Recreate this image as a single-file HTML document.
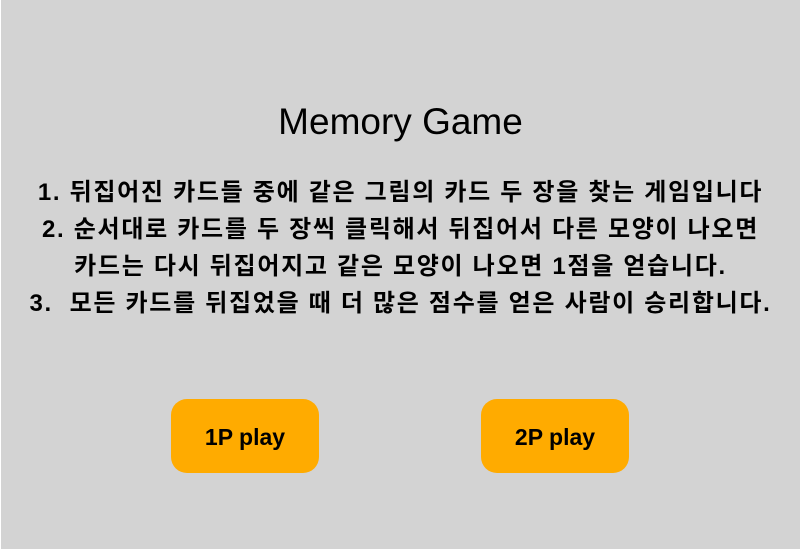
<!DOCTYPE html>
<html><head><meta charset="utf-8"><style>
html,body{margin:0;padding:0;background:#fff;}
#w{position:absolute;left:1px;top:0;width:799px;height:549px;background:#d3d3d3;font-family:"Liberation Sans","Noto Sans CJK KR",sans-serif;color:#000;}
h1{position:absolute;top:100px;left:0;width:799px;text-align:center;margin:0;font-size:37px;font-weight:normal;line-height:44px;}
.t{position:absolute;top:174px;left:0;width:799px;text-align:center;font-size:24px;line-height:37px;font-weight:bold;white-space:nowrap;letter-spacing:1.7px;}
.b{position:absolute;top:399px;width:148px;height:74px;border-radius:16px;background:#ffab00;font-size:23px;line-height:76px;text-align:center;font-weight:bold;}
</style></head><body><div id="w">
<h1>Memory Game</h1>
<div class="t">1. 뒤집어진 카드들 중에 같은 그림의 카드 두 장을 찾는 게임입니다<br>2. 순서대로 카드를 두 장씩 클릭해서 뒤집어서 다른 모양이 나오면<br>카드는 다시 뒤집어지고 같은 모양이 나오면 1점을 얻습니다.<br>3.&nbsp; 모든 카드를 뒤집었을 때 더 많은 점수를 얻은 사람이 승리합니다.</div>
<div class="b" style="left:170px">1P play</div>
<div class="b" style="left:480px">2P play</div>
</div></body></html>
